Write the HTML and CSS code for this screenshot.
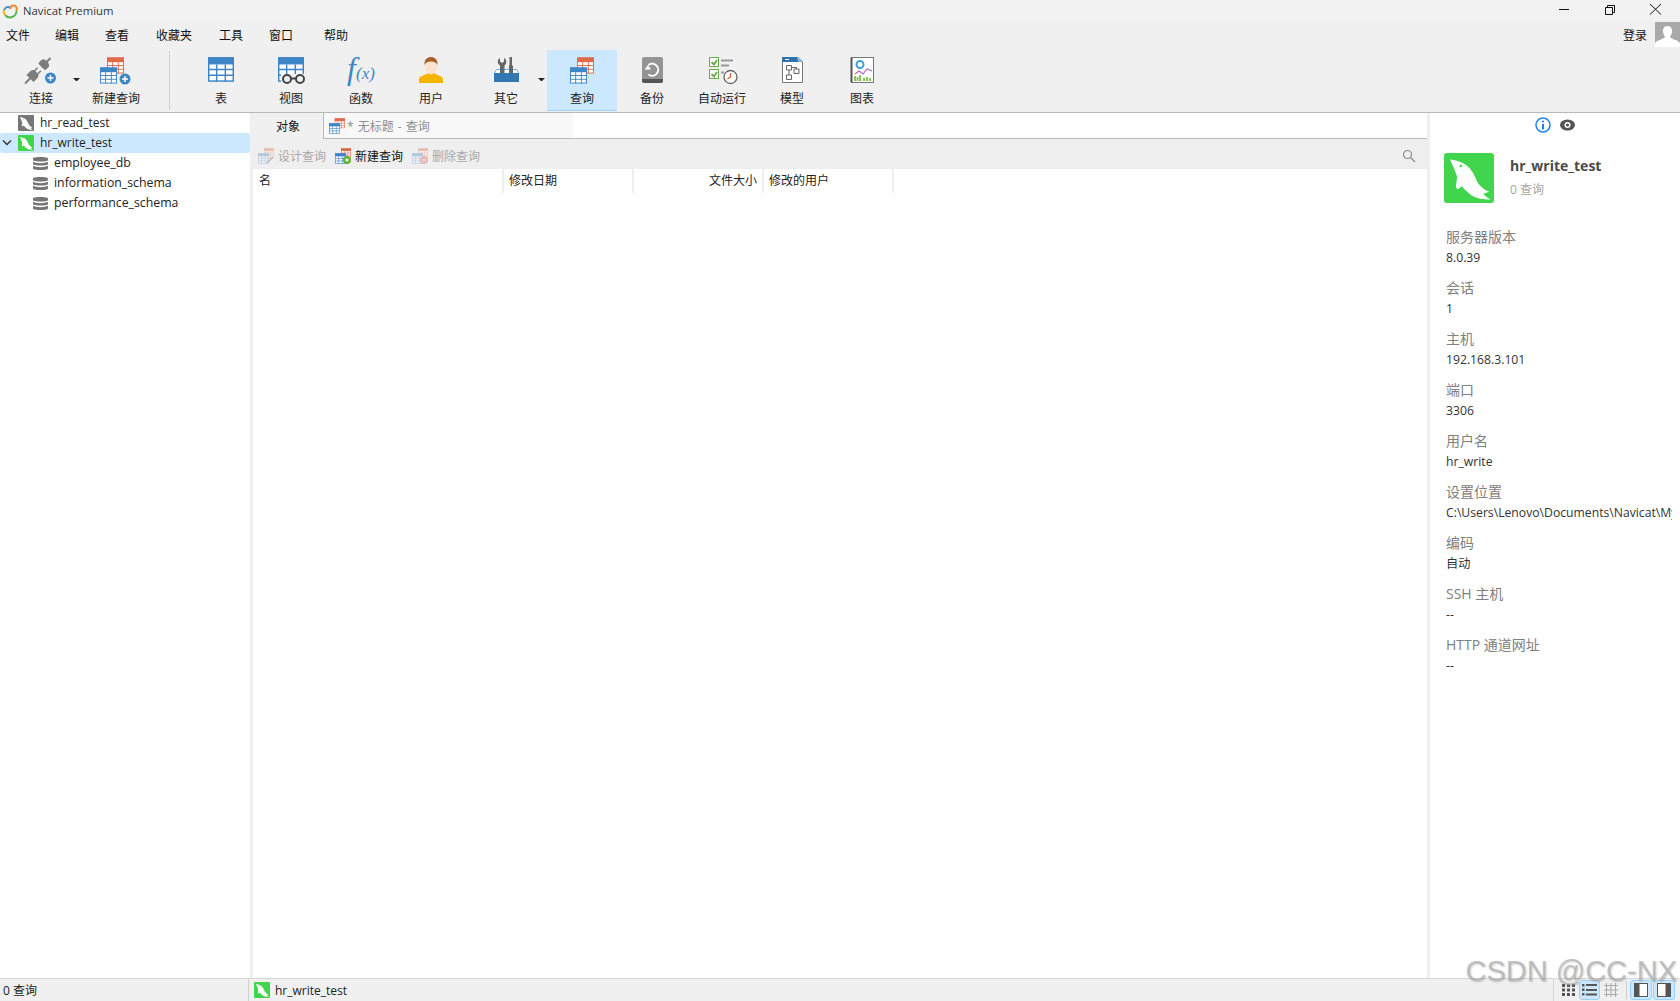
FILE: index.html
```html
<!DOCTYPE html>
<html lang="zh-CN">
<head>
	<meta charset="utf-8" />
	<title>Navicat Premium</title>
	<link rel="stylesheet" href="styles.css">
</head>
<body>
	<svg class="defs" width="0" height="0">
		<symbol id="grid-blue" viewBox="0 0 18 17">
			<rect x="0.5" y="0.5" width="17" height="16" fill="#fff" stroke="#3d85c6"/>
			<rect width="18" height="5" fill="#3d85c6"/>
			<path d="M0 8.5H18M0 12.5H18M6 5V17M12 5V17" stroke="#3d85c6" fill="none"/>
		</symbol>
		<symbol id="grid-red" viewBox="0 0 18 17">
			<rect x="0.5" y="0.5" width="17" height="16" fill="#fff" stroke="#e0694a"/>
			<rect width="18" height="5" fill="#e0694a"/>
			<path d="M0 8.5H18M0 12.5H18M6 5V17M12 5V17" stroke="#e0694a" fill="none"/>
		</symbol>
		<symbol id="dolphin" viewBox="0 0 50 50">
			<path fill-rule="evenodd" d="M6 6.500C11 7 15 8.500 18 9.700C23 12 26 15 27.700 18C30 21 31 24 32 26C33 29 35 32 37 33.500C39 35.500 42 37.500 45.300 38.700L39.300 40.700C41 43 44 45 46.700 46.300C42 46.800 38 46.300 34.300 45.300C30 44 27 42 24.300 39.700C22 37.500 19.500 35.500 17.700 33C16.500 34.500 15 35.500 13.300 36.300L12 34C12 31 12.500 27.500 13.300 24.700C12.500 22 12 20 11 18C9.500 14 7.500 10 6 6.500ZM15.500 12.500A1.300 1.300 0 1 0 18 13.300A1.300 1.300 0 1 0 15.500 12.500Z" fill="#fff"/>
		</symbol>
		<symbol id="db" viewBox="0 0 15 15">
			<path d="M0 2.5C0 .5 15 .5 15 2.5V4C15 6 0 6 0 4ZM0 5.700C3 7.600 12 7.600 15 5.700V8C15 10 0 10 0 8ZM0 9.700C3 11.600 12 11.600 15 9.700V12.500C15 14.500 0 14.500 0 12.500Z" fill="#757575"/>
		</symbol>
	</svg>

	<header class="titlebar">
		<svg class="app-logo" width="16" height="16" viewBox="0 0 16 16">
			<path d="M3 12A5.500 5.500 0 0 1 2.500 6" fill="none" stroke="#f0b429" stroke-width="2"/>
			<path d="M2.500 7A3.500 3.500 0 0 1 8.500 5" fill="none" stroke="#3d8fd9" stroke-width="2"/>
			<path d="M8 6A3.500 3.500 0 0 1 14 3.500C15 5 15 6 14.500 8" fill="none" stroke="#ef8a34" stroke-width="2"/>
			<path d="M14.500 8A6.500 6.500 0 0 1 3 12" fill="none" stroke="#55b84c" stroke-width="2"/>
		</svg>
		<span class="app-name">Navicat Premium</span>
		<div class="win-btns">
			<svg width="46" height="18" viewBox="0 0 46 18"><path d="M18 9.500H28" stroke="#111"/></svg>
			<svg width="46" height="18" viewBox="0 0 46 18"><path d="M18.500 7.500H25.500V14.500H18.500ZM20.500 7.500V5.500H27.500V12.500H25.500" fill="none" stroke="#111"/></svg>
			<svg width="46" height="18" viewBox="0 0 46 18"><path d="M17 4L28 14.500M28 4L17 14.500" fill="none" stroke="#111"/></svg>
		</div>
	</header>

	<nav class="menubar">
		<span class="menu-item m1">文件</span>
		<span class="menu-item m2">编辑</span>
		<span class="menu-item m3">查看</span>
		<span class="menu-item m4">收藏夹</span>
		<span class="menu-item m5">工具</span>
		<span class="menu-item m6">窗口</span>
		<span class="menu-item m7">帮助</span>
		<span class="login">登录</span>
		<svg class="avatar" width="25" height="25" viewBox="0 0 25 25">
			<rect width="25" height="25" fill="#a9a9a9"/>
			<path d="M12.500 4C16 4 17.500 7 17 10C16.700 12 15.500 14 15 15C16 17 23 18 25 21V25H0V21C2 18 9 17 10 15C9.500 14 8.300 12 8 10C7.500 7 9 4 12.500 4Z" fill="#fff"/>
		</svg>
	</nav>

	<div class="toolbar">
		<div class="tool tool-first">
			<svg class="tool-ico" viewBox="0 0 44 36">
				<g transform="translate(19.500 16) rotate(-45)" fill="#7d7d7d">
					<rect x="-19" y="-1" width="8" height="2"/>
					<path d="M-12 -5H-7C-5 -5 -4 -4 -3 -3H1V-1.500H-3V1.500H1V3H-3C-4 4 -5 5 -7 5H-12Z"/>
					<path d="M5 -5H9C11 -5 12 -3 12 0C12 3 11 5 9 5H5C4 3 4 -3 5 -5Z"/>
					<rect x="11" y="-1" width="6" height="2"/>
				</g>
				<circle cx="31.500" cy="24" r="5.500" fill="#3d85c6"/>
				<path d="M28.500 24H34.500M31.500 21V27" stroke="#fff" stroke-width="1.500"/>
			</svg>
			<span>连接</span>
		</div>
		<span class="caret caret-conn"></span>
		<div class="tool">
			<svg class="tool-ico" viewBox="0 0 44 36">
				<use href="#grid-red" x="13" y="3" width="17" height="17"/>
				<use href="#grid-blue" x="6" y="13" width="17" height="17"/>
				<circle cx="31" cy="25" r="5.500" fill="#3d85c6"/>
				<path d="M28 25H34M31 22V28" stroke="#fff" stroke-width="1.500"/>
			</svg>
			<span>新建查询</span>
		</div>
		<div class="tool-sep"></div>
		<div class="tool">
			<svg class="tool-ico" viewBox="0 0 44 36"><use href="#grid-blue" x="9" y="3" width="26" height="25"/></svg>
			<span>表</span>
		</div>
		<div class="tool">
			<svg class="tool-ico" viewBox="0 0 44 36">
				<use href="#grid-blue" x="9" y="3" width="26" height="25"/>
				<rect x="12" y="20" width="24" height="10" fill="#f0f0f0"/>
				<circle cx="18" cy="25" r="4" fill="none" stroke="#444" stroke-width="2"/>
				<circle cx="31" cy="25" r="4" fill="none" stroke="#444" stroke-width="2"/>
				<path d="M22 24.500H27" stroke="#444" stroke-width="2"/>
			</svg>
			<span>视图</span>
		</div>
		<div class="tool">
			<svg class="tool-ico" viewBox="0 0 44 36">
				<text class="fx-big" x="8" y="25">f</text>
				<text class="fx-small" x="17" y="25">(x)</text>
			</svg>
			<span>函数</span>
		</div>
		<div class="tool">
			<svg class="tool-ico" viewBox="0 0 44 36">
				<path d="M10 29V25C10 22 17 21 19 19H25C27 21 34 22 34 25V29Z" fill="#f4b400"/>
				<ellipse cx="22" cy="12" rx="6.500" ry="8.500" fill="#fbe3cf"/>
				<path d="M15.500 11C15 5 19 3 22 3C25 3 29 5 28.500 11C27 8 25 7.500 22 7.500C19 7.500 17 8 15.500 11Z" fill="#a8602c"/>
			</svg>
			<span>用户</span>
		</div>
		<div class="tool tool-other">
			<svg class="tool-ico" viewBox="0 0 44 36">
				<path d="M12.500 15.500H32.500L35 20H10Z" fill="#fff" stroke="#6fb0e4"/>
				<rect x="10" y="19" width="25" height="9" fill="#3279b4"/>
				<path d="M16 4V7.500L18 9L20 7.500V4C23 5.500 23 9.500 20.500 11.500V19H16V11.500C13 9.500 13 5.500 16 4Z" fill="#666"/>
				<path d="M25.500 3H28V11.500H29V19H25V11.500H25.500Z" fill="#666"/>
			</svg>
			<span>其它</span>
		</div>
		<span class="caret caret-other"></span>
		<div class="tool tool-active">
			<svg class="tool-ico" viewBox="0 0 44 36">
				<use href="#grid-red" x="17" y="3" width="17" height="17"/>
				<use href="#grid-blue" x="10" y="13" width="17" height="17"/>
			</svg>
			<span>查询</span>
		</div>
		<div class="tool">
			<svg class="tool-ico" viewBox="0 0 44 36">
				<rect x="12" y="3" width="21" height="26" rx="2" fill="#949494"/>
				<path d="M12 25H33V27C33 28 32 29 31 29H14C13 29 12 28 12 27Z" fill="#555"/>
				<path d="M18.500 11A6 6 0 1 1 18.500 20.500" fill="none" stroke="#fff" stroke-width="2"/>
				<path d="M14.500 15.500H21L18 11Z" fill="#fff"/>
			</svg>
			<span>备份</span>
		</div>
		<div class="tool">
			<svg class="tool-ico" viewBox="0 0 44 36">
				<g fill="#fff" stroke="#6aa84f">
					<rect x="9.500" y="3.500" width="9" height="9"/>
					<rect x="9.500" y="15.500" width="9" height="9"/>
				</g>
				<path d="M11.500 8L14 10.500L17 6M11.500 20L14 22.500L17 18" fill="none" stroke="#6aa84f" stroke-width="1.800"/>
				<path d="M21 6.500H33M21 11.500H29M21 18.500H24" stroke="#9a9a9a" stroke-width="2" fill="none"/>
				<circle cx="30.500" cy="23" r="6.500" fill="#fff" stroke="#666" stroke-width="1.300"/>
				<path d="M30.500 19V23L27.500 25" fill="none" stroke="#d05a3c" stroke-width="1.200"/>
			</svg>
			<span>自动运行</span>
		</div>
		<div class="tool">
			<svg class="tool-ico" viewBox="0 0 44 36">
				<path d="M12.500 3.500H28L32.500 8V28.500H12.500Z" fill="#fff" stroke="#777"/>
				<path d="M12 3H27L29 8H12Z" fill="#2f73ad"/>
				<path d="M28 3L33 8H29Z" fill="#7fb2dc"/>
				<path d="M15 5.500H19" stroke="#fff"/>
				<path d="M16.500 11.500H21.500V16H16.500ZM24 15H29V19.500H24ZM16.500 21H21.500V25.500H16.500ZM19 16V21M21.500 13.500H26.500V15" fill="none" stroke="#666"/>
			</svg>
			<span>模型</span>
		</div>
		<div class="tool">
			<svg class="tool-ico" viewBox="0 0 44 36">
				<rect x="11.500" y="3.500" width="22" height="25" fill="#fff" stroke="#777"/>
				<path d="M11.500 3.500V28.500" stroke="#555" stroke-width="2"/>
				<circle cx="20" cy="10.500" r="3.500" fill="none" stroke="#3ba0d8" stroke-width="2"/>
				<path d="M15 20L19 17L23 20L27 15L32 17" fill="none" stroke="#b267c9" stroke-width="1.200"/>
				<path d="M15 22V27M17.500 23V27M20 21V27M24 24V27M27 23V27M30 24V27" stroke="#7cc043" stroke-width="1.800"/>
			</svg>
			<span>图表</span>
		</div>
	</div>

	<main class="workspace">
		<aside class="sidebar">
			<div class="tree-row">
				<svg class="srv-ico" viewBox="0 0 50 50"><rect width="50" height="50" rx="3" fill="#777"/><use href="#dolphin" width="50" height="50"/></svg>
				<span>hr_read_test</span>
			</div>
			<div class="tree-row tree-sel">
				<svg class="arrow" width="10" height="8" viewBox="0 0 10 8"><path d="M1 1.500L5 5.500L9 1.500" fill="none" stroke="#333" stroke-width="1.400"/></svg>
				<svg class="srv-ico" viewBox="0 0 50 50"><rect width="50" height="50" rx="3" fill="#41d54d"/><use href="#dolphin" width="50" height="50"/></svg>
				<span>hr_write_test</span>
			</div>
			<div class="tree-row tree-db"><svg class="db-ico"><use href="#db"/></svg><span>employee_db</span></div>
			<div class="tree-row tree-db"><svg class="db-ico"><use href="#db"/></svg><span>information_schema</span></div>
			<div class="tree-row tree-db"><svg class="db-ico"><use href="#db"/></svg><span>performance_schema</span></div>
		</aside>

		<section class="content">
			<div class="tabs">
				<div class="tab-obj">对象</div>
				<div class="tab-query">
					<svg class="tab-ico" viewBox="0 0 16 16">
						<use href="#grid-red" x="5.500" y="0" width="10.500" height="10.500"/>
						<use href="#grid-blue" x="0" y="5" width="11" height="11"/>
					</svg>
					<span class="tab-title">* 无标题 - 查询</span>
				</div>
			</div>
			<div class="obj-bar">
				<div class="obj-btn obj-off">
					<svg class="obj-ico" viewBox="0 0 16 16">
						<use href="#grid-red" x="6" y="0" width="10" height="10"/>
						<use href="#grid-blue" x="0" y="5" width="11" height="11"/>
						<path d="M9 15L15 9" stroke="#777" stroke-width="2"/>
					</svg>
					<span>设计查询</span>
				</div>
				<div class="obj-btn">
					<svg class="obj-ico" viewBox="0 0 16 16">
						<use href="#grid-red" x="6" y="0" width="10" height="10"/>
						<use href="#grid-blue" x="0" y="5" width="11" height="11"/>
						<circle cx="12" cy="12" r="4" fill="#5cb531"/>
						<path d="M10 12H14M12 10V14" stroke="#fff"/>
					</svg>
					<span>新建查询</span>
				</div>
				<div class="obj-btn obj-off">
					<svg class="obj-ico" viewBox="0 0 16 16">
						<use href="#grid-red" x="6" y="0" width="10" height="10"/>
						<use href="#grid-blue" x="0" y="5" width="11" height="11"/>
						<circle cx="12" cy="12" r="4" fill="#d9534f"/>
						<path d="M10 12H14" stroke="#fff"/>
					</svg>
					<span>删除查询</span>
				</div>
				<svg class="search" width="14" height="14" viewBox="0 0 14 14">
					<circle cx="5.500" cy="5.500" r="4" fill="none" stroke="#8a8a8a" stroke-width="1.200"/>
					<path d="M8.500 8.500L13 13" stroke="#8a8a8a" stroke-width="1.200"/>
				</svg>
			</div>
			<div class="col-head">
				<div class="col col-name">名</div>
				<div class="col col-date">修改日期</div>
				<div class="col col-size">文件大小</div>
				<div class="col col-user">修改的用户</div>
			</div>
			<div class="obj-list"></div>
		</section>

		<aside class="info">
			<div class="info-tabs">
				<svg width="16" height="16" viewBox="0 0 16 16">
					<circle cx="8" cy="8" r="7" fill="#fff" stroke="#1a83ee" stroke-width="1.500"/>
					<path d="M8 7V12.500" stroke="#1a83ee" stroke-width="2"/>
					<circle cx="8" cy="4.500" r="1.100" fill="#1a83ee"/>
				</svg>
				<svg width="15" height="12" viewBox="0 0 15 12">
					<ellipse cx="7.500" cy="6" rx="7.500" ry="5.500" fill="#555"/>
					<circle cx="7.500" cy="6" r="3" fill="#fff"/>
					<circle cx="7.500" cy="6" r="1.600" fill="#555"/>
				</svg>
			</div>
			<div class="info-head">
				<svg class="info-logo" viewBox="0 0 50 50"><rect width="50" height="50" rx="3" fill="#41d54d"/><use href="#dolphin" width="50" height="50"/></svg>
				<div>
					<div class="info-name">hr_write_test</div>
					<div class="info-count">0 查询</div>
				</div>
			</div>
			<dl class="info-list">
				<dt>服务器版本</dt><dd>8.0.39</dd>
				<dt>会话</dt><dd>1</dd>
				<dt>主机</dt><dd>192.168.3.101</dd>
				<dt>端口</dt><dd>3306</dd>
				<dt>用户名</dt><dd>hr_write</dd>
				<dt>设置位置</dt><dd>C:\Users\Lenovo\Documents\Navicat\MySQL\Servers</dd>
				<dt>编码</dt><dd>自动</dd>
				<dt>SSH 主机</dt><dd>--</dd>
				<dt>HTTP 通道网址</dt><dd>--</dd>
			</dl>
		</aside>
	</main>

	<footer class="statusbar">
		<div class="st-left">0 查询</div>
		<div class="st-conn">
			<svg class="st-ico" viewBox="0 0 50 50"><rect width="50" height="50" rx="3" fill="#41d54d"/><use href="#dolphin" width="50" height="50"/></svg>
			<span>hr_write_test</span>
		</div>
		<div class="st-right">
			<span class="st-btn"><svg width="14" height="12" viewBox="0 0 14 12"><path d="M0 0H3V3H0ZM5 0H8V3H5ZM10 0H13V3H10ZM0 4.500H3V7.500H0ZM5 4.500H8V7.500H5ZM10 4.500H13V7.500H10ZM0 9H3V12H0ZM5 9H8V12H5ZM10 9H13V12H10Z" fill="#555"/></svg></span>
			<span class="st-btn st-on"><svg width="15" height="12" viewBox="0 0 15 12"><path d="M0 0H2.500V2.500H0ZM4 0H15V2H4ZM0 4.500H2.500V7H0ZM4 5H15V7H4ZM0 9H2.500V11.500H0ZM4 9.500H15V11.500H4Z" fill="#555"/></svg></span>
			<span class="st-btn"><svg width="14" height="14" viewBox="0 0 14 14"><path d="M0 2.500H14M0 7H14M0 11.500H14M2.500 0V14M7 0V14M11.500 0V14" stroke="#aaa" fill="none"/></svg></span>
			<span class="st-div"></span>
			<span class="st-btn st-wide st-on"><svg width="14" height="14" viewBox="0 0 14 14"><rect x="0.500" y="0.500" width="13" height="13" fill="#fff" stroke="#555"/><rect x="1" y="1" width="4.500" height="12" fill="#555"/></svg></span>
			<span class="st-btn st-wide st-on"><svg width="14" height="14" viewBox="0 0 14 14"><rect x="0.500" y="0.500" width="13" height="13" fill="#fff" stroke="#555"/><rect x="8.500" y="1" width="4.500" height="12" fill="#555"/></svg></span>
		</div>
	</footer>

	<div class="watermark">CSDN @CC-NX</div>
</body>
</html>
```

FILE: styles.css
```css
* {
	box-sizing: border-box;
}
html, body {
	height: 100%;
}
body {
	margin: 0;
	display: flex;
	flex-direction: column;
	overflow: hidden;
	background: #fff;
	color: #1a1a1a;
	font-family: "Open Sans", "Noto Sans CJK SC", sans-serif;
	font-size: 12px;
}
.defs {
	position: absolute;
}
svg {
	display: block;
	flex: none;
	overflow: hidden;
}
/*-------------------*/
.titlebar {
	height: 22px;
	display: flex;
	align-items: center;
	background: #f3f2f2;
}
.app-logo {
	margin-left: 2px;
}
.app-name {
	margin: -2px 0 0 5px;
	color: #333;
	font-size: 11.3px;
}
.win-btns {
	align-self: flex-start;
	margin-left: auto;
	margin-right: 1px;
	display: flex;
}
/*-------------------*/
.menubar {
	height: 25px;
	display: flex;
	align-items: center;
	background: #f0f0f0;
}
.menu-item {
	color: #111;
}
.m1 { margin-left: 6px; }
.m2 { margin-left: 25px; }
.m3 { margin-left: 26px; }
.m4 { margin-left: 27px; }
.m5 { margin-left: 27px; }
.m6 { margin-left: 26px; }
.m7 { margin-left: 31px; }
.login {
	margin-left: auto;
	margin-right: 8px;
	color: #111;
}
/*-------------------*/
.toolbar {
	height: 66px;
	display: flex;
	padding-top: 3px;
	background: #f0f0f0;
	border-bottom: 1px solid #b9b9b9;
}
.tool {
	width: 70px;
	height: 61px;
	display: flex;
	flex-direction: column;
	align-items: center;
	color: #222;
}
.tool-first {
	margin-left: 6px;
}
.tool-other {
	margin-left: 5px;
}
.tool-active {
	background: #cce8ff;
	border-bottom: 1px solid #99d1ff;
}
.tool-ico {
	width: 44px;
	height: 36px;
	margin-top: 4px;
}
.tool span {
	line-height: 18px;
}
.caret {
	width: 7px;
	height: 3px;
	margin-top: 28px;
	margin-left: -3px;
	border-top: 3px solid #222;
	border-left: 3px solid transparent;
	border-right: 3px solid transparent;
}
.caret-conn {
	margin-right: 1px;
}
.caret-other {
	margin-right: 2px;
}
.tool-sep {
	width: 1px;
	height: 59px;
	margin: 1px 16px 0 18px;
	background: #cfcfcf;
}
.fx-big {
	font-family: "Liberation Serif", serif;
	font-style: italic;
	font-size: 32px;
	fill: #3d85c6;
}
.fx-small {
	font-family: "Liberation Serif", serif;
	font-style: italic;
	font-size: 17px;
	fill: #3d85c6;
}
/*-------------------*/
.workspace {
	flex: 1;
	min-height: 0;
	display: flex;
}
.sidebar {
	width: 250px;
}
.tree-row {
	height: 20px;
	display: flex;
	align-items: center;
	padding-left: 18px;
	color: #222;
	font-size: 12px;
}
.tree-row span {
	margin-bottom: 2px;
}
.tree-sel {
	position: relative;
	background: #cce8ff;
	border-radius: 2px;
}
.arrow {
	position: absolute;
	left: 2px;
	top: 6px;
}
.srv-ico {
	width: 16px;
	height: 16px;
	margin-right: 6px;
}
.tree-db {
	padding-left: 33px;
	font-size: 12.3px;
}
.db-ico {
	width: 15px;
	height: 15px;
	margin-right: 6px;
}
/*-------------------*/
.content {
	flex: 1;
	min-width: 0;
	display: flex;
	flex-direction: column;
	border-left: 3px solid #efefef;
	border-right: 3px solid #efefef;
}
.tabs {
	height: 26px;
	display: flex;
	background: #fff;
	border-bottom: 1px solid #b9b9b9;
}
.tab-obj {
	width: 70px;
	display: flex;
	align-items: center;
	justify-content: center;
	background: #f0f0f0;
	color: #111;
	margin-bottom: -1px;
}
.tab-query {
	width: 250px;
	display: flex;
	align-items: center;
	gap: 2px;
	padding-left: 5px;
	background: #f8f8f8;
	border-left: 1px solid #b9b9b9;
	color: #8f8f8f;
}
.tab-title {
	word-spacing: 1px;
}
.tab-ico {
	width: 16px;
	height: 16px;
}
.obj-bar {
	height: 30px;
	display: flex;
	align-items: center;
	padding: 3px 0 0 5px;
	background: #efefef;
}
.obj-btn {
	display: flex;
	align-items: center;
	gap: 4px;
	margin-right: 9px;
	color: #111;
}
.obj-off {
	color: #a8a8a8;
}
.obj-off .obj-ico {
	opacity: 0.35;
}
.obj-ico {
	width: 16px;
	height: 16px;
}
.search {
	margin-left: auto;
	margin-right: 11px;
}
.col-head {
	height: 24px;
	display: flex;
}
.col {
	display: flex;
	align-items: center;
	padding: 0 5px 2px;
	color: #222;
	border-right: 2px solid #efefef;
}
.col-name { width: 251px; padding-left: 6px; }
.col-date { width: 130px; }
.col-size { width: 130px; justify-content: flex-end; }
.col-user { width: 130px; }
.obj-list {
	flex: 1;
}
/*-------------------*/
.info {
	width: 250px;
	padding: 0 8px 0 16px;
	overflow: hidden;
}
.info-tabs {
	height: 24px;
	display: flex;
	align-items: center;
	justify-content: center;
	gap: 9px;
	margin-left: -8px;
}
.info-head {
	display: flex;
	align-items: flex-start;
	gap: 16px;
	margin: 16px 0 0 -2px;
}
.info-logo {
	width: 50px;
	height: 50px;
}
.info-name {
	margin-top: 4px;
	color: #4a4a4a;
	font-size: 14px;
	font-weight: 700;
	line-height: 18px;
}
.info-count {
	margin-top: 6px;
	color: #a5a5a5;
	line-height: 18px;
}
.info-list {
	margin: 24px 0 0;
}
.info-list dt {
	height: 21px;
	line-height: 20px;
	color: #808080;
	font-size: 14px;
}
.info-list dd {
	height: 30px;
	margin: 0;
	line-height: 20px;
	color: #333;
	font-size: 12.2px;
	white-space: nowrap;
	overflow: hidden;
}
/*-------------------*/
.statusbar {
	height: 23px;
	display: flex;
	align-items: center;
	background: #f0f0f0;
	border-top: 1px solid #d6d6d6;
	color: #222;
}
.st-left {
	width: 249px;
	height: 100%;
	display: flex;
	align-items: center;
	padding-left: 3px;
	border-right: 1px solid #cfcfcf;
}
.st-conn {
	display: flex;
	align-items: center;
	gap: 5px;
	margin-left: 5px;
}
.st-ico {
	width: 16px;
	height: 16px;
}
.st-right {
	margin-left: auto;
	margin-right: 5px;
	display: flex;
	align-items: center;
	height: 100%;
	padding-left: 4px;
	border-left: 1px solid #d6d6d6;
}
.st-btn {
	width: 21px;
	height: 20px;
	display: flex;
	align-items: center;
	justify-content: center;
	border: 1px solid transparent;
	border-radius: 3px;
}
.st-wide {
	width: 22px;
	margin-right: 1px;
}
.st-wide:last-child {
	margin-right: 0;
}
.st-on {
	background: #cce8ff;
	border-color: #99d1ff;
}
.st-div {
	width: 1px;
	height: 19px;
	margin: 0 3px 0 5px;
	background: #cfcfcf;
}
/* watermark over the status bar */
.watermark {
	position: absolute;
	right: 3px;
	bottom: 13px;
	color: rgba(175, 175, 175, 0.7);
	font-family: "Liberation Sans", sans-serif;
	font-size: 29px;
	line-height: 34px;
	text-shadow: 1px 1px 2px rgba(120, 120, 120, 0.4);
	pointer-events: none;
}
```
